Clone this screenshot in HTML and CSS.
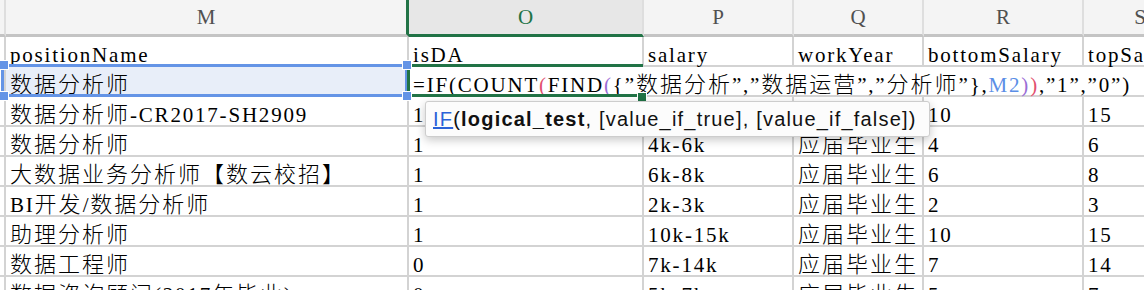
FILE: index.html
```html
<!DOCTYPE html>
<html lang="zh">
<head>
<meta charset="utf-8">
<title>Sheet</title>
<link rel="stylesheet" href="styles.css">
</head>
<body>
<div class="sheet">
  <div class="hd"></div>
  <div class="hd m">M</div>
  <div class="hd sel">O</div>
  <div class="hd">P</div>
  <div class="hd">Q</div>
  <div class="hd">R</div>
  <div class="hd">S</div>

  <div class="c"></div>
  <div class="c">positionName</div>
  <div class="c">isDA</div>
  <div class="c">salary</div>
  <div class="c">workYear</div>
  <div class="c">bottomSalary</div>
  <div class="c">topSalary</div>

  <div class="c"></div>
  <div class="c ref"><span class="k">数据分析师</span><i class="rbox"></i><i class="h tl"></i><i class="h tr"></i><i class="h bl"></i><i class="h br"></i></div>
  <div class="c edit">=IF(COUNT<span class="pr">(</span>FIND<span class="pp">(</span>{”<span class="k">数据分析</span>”,”<span class="k">数据运营</span>”,”<span class="k">分析师</span>”},<span class="rf">M2</span><span class="pp">)</span><span class="pr">)</span>,”1”,”0”)<i class="gbox"></i><i class="fill"></i></div>

  <div class="c"></div>
  <div class="c"><span class="k">数据分析师</span>-CR2017-SH2909</div>
  <div class="c">1</div>
  <div class="c">10k-15k</div>
  <div class="c"><span class="k">应届毕业生</span></div>
  <div class="c">10</div>
  <div class="c">15</div>

  <div class="c"></div>
  <div class="c"><span class="k">数据分析师</span></div>
  <div class="c">1</div>
  <div class="c">4k-6k</div>
  <div class="c"><span class="k">应届毕业生</span></div>
  <div class="c">4</div>
  <div class="c">6</div>

  <div class="c"></div>
  <div class="c"><span class="k">大数据业务分析师【数云校招】</span></div>
  <div class="c">1</div>
  <div class="c">6k-8k</div>
  <div class="c"><span class="k">应届毕业生</span></div>
  <div class="c">6</div>
  <div class="c">8</div>

  <div class="c"></div>
  <div class="c">BI<span class="k">开发</span>/<span class="k">数据分析师</span></div>
  <div class="c">1</div>
  <div class="c">2k-3k</div>
  <div class="c"><span class="k">应届毕业生</span></div>
  <div class="c">2</div>
  <div class="c">3</div>

  <div class="c"></div>
  <div class="c"><span class="k">助理分析师</span></div>
  <div class="c">1</div>
  <div class="c">10k-15k</div>
  <div class="c"><span class="k">应届毕业生</span></div>
  <div class="c">10</div>
  <div class="c">15</div>

  <div class="c"></div>
  <div class="c"><span class="k">数据工程师</span></div>
  <div class="c">0</div>
  <div class="c">7k-14k</div>
  <div class="c"><span class="k">应届毕业生</span></div>
  <div class="c">7</div>
  <div class="c">14</div>

  <div class="c"></div>
  <div class="c"><span class="k">数据咨询顾问</span>(2017<span class="k">年毕业</span>)</div>
  <div class="c">0</div>
  <div class="c">5k-7k</div>
  <div class="c"><span class="k">应届毕业生</span></div>
  <div class="c">5</div>
  <div class="c">7</div>
</div>

<div class="tip"><span class="fn">IF</span>(<b>logical_test</b>, [value_if_true], [value_if_false])</div>
</body>
</html>
```

FILE: styles.css
```css
html, body {
  margin: 0;
  padding: 0;
}

body {
  width: 1144px;
  height: 290px;
  overflow: hidden;
  background: #ffffff;
  position: relative;
}

.sheet {
  display: grid;
  grid-template-columns: 6px 403px 235px 150px 130px 160px 114px;
  grid-template-rows: 37px;
  grid-auto-rows: 30px;
  font-family: "Liberation Serif", "Noto Sans CJK SC", serif;
  font-size: 21px;
  letter-spacing: 1.8px;
  color: #000000;
}

.hd {
  box-sizing: border-box;
  background: #f4f4f4;
  border-right: 2px solid #dedede;
  border-bottom: 3px solid #c4c4c4;
  text-align: center;
  font-size: 21px;
  letter-spacing: 0;
  line-height: 34px;
  color: #505050;
}

.hd.m {
  border-right: 3px solid #217346;
}

.hd.sel {
  background: #e7e7e7;
  color: #217346;
  border-bottom-color: #217346;
}

.c {
  box-sizing: border-box;
  position: relative;
  border-right: 2px solid #d3d3d3;
  border-bottom: 2px solid #d3d3d3;
  padding: 4px 0 0 4px;
  line-height: 28px;
  white-space: nowrap;
}

.k {
  font-family: "Noto Sans CJK SC", sans-serif;
  font-weight: 300;
  font-size: 22px;
  letter-spacing: 2px;
  line-height: 20px;
}

.ref {
  background: #e8eef9;
}

.edit {
  grid-column: span 5;
  border-right: none;
}

.pr { color: #e2506f; }
.pp { color: #9a6dd6; }
.rf { color: #5b8ee6; }

.rbox {
  position: absolute;
  left: -5px;
  top: -3px;
  width: 407px;
  height: 33px;
  box-sizing: border-box;
  border: 3px solid #6494e6;
  z-index: 1;
}

.h {
  position: absolute;
  width: 8px;
  height: 8px;
  background: #6494e6;
  border: 1px solid #ffffff;
  z-index: 3;
}

.h.tl { left: -7px; top: -7px; }
.h.tr { left: 396px; top: -7px; }
.h.bl { left: -7px; top: 24px; }
.h.br { left: 396px; top: 24px; }

.gbox {
  position: absolute;
  left: -2px;
  top: -3px;
  width: 236px;
  height: 33px;
  box-sizing: border-box;
  border: 3px solid #217346;
  border-right: none;
  z-index: 2;
}

.fill {
  position: absolute;
  left: 228px;
  top: 25px;
  width: 8px;
  height: 8px;
  background: #217346;
  border: 1px solid #ffffff;
  z-index: 2;
}

.tip {
  position: absolute;
  left: 425px;
  top: 101px;
  width: 505px;
  height: 36px;
  box-sizing: border-box;
  padding: 1px 0 0 7px;
  background: #fcfcfc;
  border: 1px solid #cdcdcd;
  border-radius: 3px;
  box-shadow: 0 3px 10px rgba(0, 0, 0, 0.22);
  font-family: "Liberation Sans", Arial, sans-serif;
  font-size: 20px;
  letter-spacing: 1.2px;
  line-height: 33px;
  color: #111111;
  white-space: nowrap;
  z-index: 5;
}

.tip .fn {
  color: #2a62d8;
  text-decoration: underline;
}

.tip b {
  font-weight: bold;
}
```
